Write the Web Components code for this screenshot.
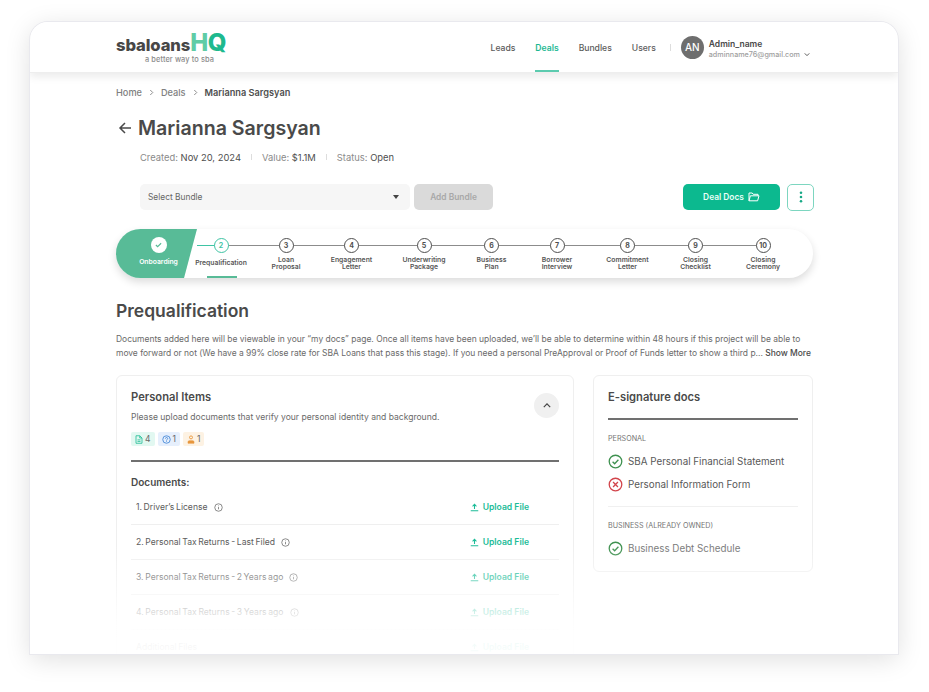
<!DOCTYPE html>
<html lang="en">
<head>
<meta charset="utf-8">
<title>Deals</title>
<style>
    html, body { margin: 0; background: #fff; }
    body {
        padding: 22px 30px 0;
        height: 692px;
        box-sizing: border-box;
        overflow: hidden;
        font-family: Inter, "Liberation Sans", sans-serif;
        color: #4a4a4a;
    }
</style>
</head>
<body>
<app-window>
    <app-header slot="header"></app-header>
    <bread-crumbs></bread-crumbs>
    <deal-summary></deal-summary>
    <deal-toolbar></deal-toolbar>
    <deal-stepper></deal-stepper>
    <stage-intro></stage-intro>
    <div style="display:flex;gap:19px;align-items:flex-start;margin-top:15px">
        <personal-items></personal-items>
        <esign-docs></esign-docs>
    </div>
</app-window>

<script>
const icons = {
    info: `<svg viewBox="0 0 12 12" width="9" height="9" fill="none" stroke="currentColor" stroke-width="1"><circle cx="6" cy="6" r="5"/><path d="M6 5.4v3M6 3.4v.9"/></svg>`,
    upload: `<svg viewBox="0 0 12 12" width="9" height="9" fill="none" stroke="currentColor" stroke-width="1.4"><path d="M6 8V2M3.4 4.4 6 1.8l2.6 2.6M1 10.4h10"/></svg>`,
    ok: `<svg viewBox="0 0 16 16" width="15" height="15" fill="none" stroke="#3f9150" stroke-width="1.4"><circle cx="8" cy="8" r="6.7"/><path d="m4.9 8.2 2.2 2.2 4-4.2"/></svg>`,
    bad: `<svg viewBox="0 0 16 16" width="15" height="15" fill="none" stroke="#d2454c" stroke-width="1.4"><circle cx="8" cy="8" r="6.7"/><path d="m5.4 5.4 5.2 5.2M10.6 5.4l-5.2 5.2"/></svg>`,
};

class AppWindow extends HTMLElement {
    constructor() {
        super();
        this.attachShadow({ mode: 'open' });
        this.shadowRoot.innerHTML = `
            <style>
                :host {
                    display: block;
                    position: relative;
                    width: 868px;
                    height: 632px;
                    box-sizing: border-box;
                    background: #fff;
                    border-radius: 18px 18px 0 0;
                    box-shadow: 0 0 0 1px #e9e9ee, 0 5px 26px rgba(0,0,0,.13);
                    overflow: hidden;
                }
                main { padding: 0 85px 0 86px; }
                .fade {
                    position: absolute;
                    left: 0; right: 0; bottom: 0;
                    height: 110px;
                    background: linear-gradient(rgba(255,255,255,0), rgba(255,255,255,.62) 50%, rgba(255,255,255,.9) 72%, rgba(255,255,255,.97));
                }
            </style>
            <slot name="header"></slot>
            <main><slot></slot></main>
            <div class="fade"></div>
        `;
    }
}

class AppHeader extends HTMLElement {
    constructor() {
        super();
        this.attachShadow({ mode: 'open' });
        this.shadowRoot.innerHTML = `
            <style>
                :host {
                    display: flex;
                    align-items: stretch;
                    justify-content: space-between;
                    position: relative;
                    height: 50px;
                    padding: 0 88px 0 86px;
                    background: #fff;
                    box-shadow: 0 1px 0 #eee, 0 5px 8px rgba(0,0,0,.08);
                }
                .logo { display: flex; flex-direction: column; padding-top: 11px; line-height: 1; }
                .mark { display: flex; align-items: baseline; font-weight: 800; font-size: 16.6px; color: #474747; height: 23px; letter-spacing: -.1px; }
                .hq { font-size: 24px; letter-spacing: -.4px; line-height: 20px; color: #5fcca6; }
                .hq b { color: #1eb98e; font-weight: 800; }
                .tag { font-size: 7.4px; font-weight: 500; color: #8b8b8b; margin: 0 0 0 29px; letter-spacing: .1px; }
                nav { display: flex; align-items: stretch; font-size: 8.6px; color: #5b5b5b; font-weight: 500; }
                nav a { display: flex; align-items: center; margin-right: 20px; padding-top: 1px; box-sizing: border-box; }
                nav a.on { color: #1cb893; font-weight: 600; box-shadow: inset 0 -2px #5ccbaf; }
                .sep { align-self: center; width: 1px; height: 7px; background: #ddd; margin: 0 10px 0 -6px; }
                .user { display: flex; align-items: center; gap: 5px; }
                .av { width: 23px; height: 23px; border-radius: 50%; background: #6e6e6e; color: #fff; font-size: 10px; display: flex; align-items: center; justify-content: center; }
                .nm { font-size: 8.5px; font-weight: 600; color: #4a4a4a; line-height: 11px; margin-top: 3px; }
                .ml { font-size: 7.2px; color: #a0a0a0; line-height: 9px; display: flex; align-items: center; gap: 4px; }
            </style>
            <div class="logo">
                <div class="mark">sbaloans<span class="hq">H<b>Q</b></span></div>
                <div class="tag">a better way to sba</div>
            </div>
            <nav>
                <a>Leads</a><a class="on">Deals</a><a>Bundles</a><a>Users</a>
                <span class="sep"></span>
                <div class="user">
                    <div class="av">AN</div>
                    <div>
                        <div class="nm">Admin_name</div>
                        <div class="ml">adminname76@gmail.com
                            <svg viewBox="0 0 8 6" width="6" height="5" fill="none" stroke="#555" stroke-width="1.3"><path d="m1 1.5 3 3 3-3"/></svg>
                        </div>
                    </div>
                </div>
            </nav>
        `;
    }
}

class BreadCrumbs extends HTMLElement {
    constructor() {
        super();
        this.attachShadow({ mode: 'open' });
        const chev = `<svg viewBox="0 0 6 8" width="5" height="7" fill="none" stroke="#777" stroke-width="1"><path d="m1.5 1 3 3-3 3"/></svg>`;
        this.shadowRoot.innerHTML = `
            <style>
                :host { display: flex; align-items: center; gap: 7px; font-size: 9.2px; font-weight: 500; color: #808080; padding-top: 14px; height: 12px; }
                b { font-weight: 600; color: #4f4f4f; }
            </style>
            <span>Home</span>${chev}<span>Deals</span>${chev}<b>Marianna Sargsyan</b>
        `;
    }
}

class DealSummary extends HTMLElement {
    constructor() {
        super();
        this.attachShadow({ mode: 'open' });
        this.shadowRoot.innerHTML = `
            <style>
                :host { display: block; }
                h1 { display: flex; align-items: center; gap: 6px; margin: 18px 0 0 2px; font-size: 19.6px; line-height: 24px; font-weight: 600; color: #4a4a4a; }
                .meta { display: flex; align-items: center; margin: 10px 0 0 24px; font-size: 9.4px; color: #8a8a8a; height: 14px; }
                .meta b { font-weight: 400; color: #4f4f4f; }
                i { width: 1px; height: 6px; background: #ddd; margin: 0 10px; }
            </style>
            <h1>
                <svg viewBox="0 0 14 14" width="14" height="14" fill="none" stroke="#4a4a4a" stroke-width="1.5"><path d="M13 7H2M7 2 2 7l5 5"/></svg>
                Marianna Sargsyan
            </h1>
            <div class="meta">
                <span>Created: <b>Nov 20, 2024</b></span><i></i>
                <span>Value: <b>$1.1M</b></span><i></i>
                <span>Status: <b>Open</b></span>
            </div>
        `;
    }
}

class DealToolbar extends HTMLElement {
    constructor() {
        super();
        this.attachShadow({ mode: 'open' });
        this.shadowRoot.innerHTML = `
            <style>
                :host { display: flex; align-items: center; margin: 20px -1px 0 24px; height: 26px; font-size: 8.4px; }
                .select { display: flex; align-items: center; justify-content: space-between; box-sizing: border-box; width: 270px; height: 26px; padding: 0 11px 0 8px; background: #f6f6f6; border-radius: 5px; color: #666; }
                .select i { border: 3.5px solid transparent; border-top: 4px solid #444; border-bottom: 0; }
                .add { display: flex; align-items: center; justify-content: center; width: 79px; height: 26px; margin-left: 4px; background: #dadada; border-radius: 5px; color: #a8a8a8; font-weight: 600; }
                .docs { display: flex; align-items: center; justify-content: center; gap: 4px; width: 97px; height: 26px; margin-left: auto; background: #0cb98f; border-radius: 5px; color: #e9fff8; font-weight: 600; }
                .more { display: flex; align-items: center; justify-content: center; box-sizing: border-box; width: 27px; height: 27px; margin-left: 7px; border: 1px solid #7dd6c0; border-radius: 5px; background: #fff; }
            </style>
            <div class="select">Select Bundle<i></i></div>
            <div class="add">Add Bundle</div>
            <div class="docs">Deal Docs
                <svg viewBox="0 0 12 10" width="12" height="10" fill="none" stroke="#fff" stroke-width="1"><path d="M1 8.8V1h3.2l1 1.3H10v1.5M1 8.8h8.6L11 3.8H2.4z"/></svg>
            </div>
            <div class="more">
                <svg viewBox="0 0 4 14" width="4" height="12" fill="#17a886"><circle cx="2" cy="2" r="1.5"/><circle cx="2" cy="7" r="1.5"/><circle cx="2" cy="12" r="1.5"/></svg>
            </div>
        `;
    }
}

class DealStepper extends HTMLElement {
    steps = [
        ['2', 'Prequalification', 48], ['3', 'Loan<br>Proposal', 82], ['4', 'Engagement<br>Letter', 49],
        ['5', 'Underwriting<br>Package', 96], ['6', 'Business<br>Plan', 39], ['7', 'Borrower<br>Interview', 92],
        ['8', 'Commitment<br>Letter', 49], ['9', 'Closing<br>Checklist', 87], ['10', 'Closing<br>Ceremony', 48],
    ];

    constructor() {
        super();
        this.attachShadow({ mode: 'open' });
        this.render();
    }

    render() {
        const cells = this.steps.map(([num, label, width], i) => `
            <div class="step ${i === 0 ? 'on' : ''}" style="width:${width}px">
                <span class="dot">${num}</span>
                <span class="lbl">${label}</span>
            </div>`).join('');

        this.shadowRoot.innerHTML = `
            <style>
                :host {
                    display: flex;
                    position: relative;
                    height: 49px;
                    margin-top: 19px;
                    border-radius: 25px;
                    background: #fff;
                    box-shadow: 0 4px 8px rgba(0,0,0,.14);
                    font-size: 6.8px;
                    font-weight: 600;
                    color: #565656;
                }
                .first {
                    width: 81px;
                    height: 49px;
                    border-radius: 25px 0 0 25px;
                    background: #58bb97;
                    clip-path: polygon(0 0, 100% 0, 84% 100%, 0 100%);
                    color: #fff;
                    display: flex;
                    flex-direction: column;
                    align-items: center;
                    padding: 8px 0 0 4px;
                    box-sizing: border-box;
                    flex: none;
                }
                .check { width: 16px; height: 16px; border-radius: 50%; background: #fff; display: flex; align-items: center; justify-content: center; margin-bottom: 4px; }
                .line { position: absolute; left: 81px; width: 566px; top: 16px; height: 1px; background: #8c8c8c; }
                .line::before { content: ''; position: absolute; left: 0; top: 0; width: 18px; height: 1px; background: #3fc4a4; }
                .step { position: relative; flex: none; display: flex; flex-direction: column; align-items: center; padding-top: 9px; box-sizing: border-box; height: 49px; }
                .dot { display: flex; align-items: center; justify-content: center; box-sizing: border-box; width: 15px; height: 15px; border-radius: 50%; border: 1px solid #4f4f4f; background: #fff; font-size: 7px; font-weight: 700; color: #4f4f4f; }
                .lbl { margin-top: 3px; line-height: 7.4px; text-align: center; white-space: nowrap; }
                .on .dot { border-color: #3fc4a4; color: #3fc4a4; }
                .on .lbl { margin-top: 6px; }
                .on::after { content: ''; position: absolute; left: 10px; bottom: 0; width: 30px; height: 2px; background: #58bb97; }
            </style>
            <div class="first">
                <span class="check"><svg viewBox="0 0 8 6" width="7" height="6" fill="none" stroke="#58bb97" stroke-width="1.3"><path d="m1 3 2 2 4-4"/></svg></span>
                <span>Onboarding</span>
            </div>
            <div class="line"></div>
            ${cells}
        `;
    }
}

class StageIntro extends HTMLElement {
    constructor() {
        super();
        this.attachShadow({ mode: 'open' });
        this.shadowRoot.innerHTML = `
            <style>
                :host { display: block; margin-top: 22px; }
                h2 { margin: 0; font-size: 17.5px; line-height: 21px; font-weight: 600; color: #4a4a4a; }
                p { margin: 11px 0 0; font-size: 8.48px; line-height: 14px; color: #6a6a6a; white-space: nowrap; }
                span { letter-spacing: -.02px; }
                b { font-weight: 500; color: #4a4a4a; }
            </style>
            <h2>Prequalification</h2>
            <p>Documents added here will be viewable in your “my docs” page. Once all items have been uploaded, we’ll be able to determine within 48 hours if this project will be able to<br><span>move forward or not (We have a 99% close rate for SBA Loans that pass this stage). If you need a personal PreApproval or Proof of Funds letter to show a third p...</span> <b>Show More</b></p>
        `;
    }
}

class UploadRow extends HTMLElement {
    constructor() {
        super();
        this.attachShadow({ mode: 'open' });
    }

    connectedCallback() {
        const hasInfo = this.dataset.info !== 'no';
        this.shadowRoot.innerHTML = `
            <style>
                :host { display: flex; align-items: center; height: 35px; box-sizing: border-box; border-bottom: 1px solid #efefef; padding: 0 30px 0 5px; font-size: 8.6px; word-spacing: -.8px; color: #5c5c5c; }
                .info { display: flex; margin-left: 6px; color: #666; }
                .up { display: flex; align-items: center; gap: 4px; margin-left: auto; color: #1cbc98; font-weight: 600; word-spacing: 0; }
            </style>
            <span>${this.dataset.label}</span>
            ${hasInfo ? `<span class="info">${icons.info}</span>` : ''}
            <span class="up">${icons.upload}Upload File</span>
        `;
    }
}
customElements.define('upload-row', UploadRow);

class PersonalItems extends HTMLElement {
    constructor() {
        super();
        this.attachShadow({ mode: 'open' });
        this.shadowRoot.innerHTML = `
            <style>
                :host { display: block; position: relative; box-sizing: border-box; width: 458px; flex: none; padding: 14px 14px 0; border: 1px solid #efefef; border-radius: 6px; background: #fff; }
                h3 { margin: 0; font-size: 11.2px; line-height: 15px; font-weight: 600; color: #4a4a4a; }
                .sub { margin: 6px 0 0; font-size: 8.55px; line-height: 12px; color: #6a6a6a; }
                .toggle { position: absolute; right: 14px; top: 17px; width: 25px; height: 25px; border-radius: 50%; background: #f0f0f0; display: flex; align-items: center; justify-content: center; }
                .chips { display: flex; gap: 3px; margin-top: 9px; }
                .chip { display: flex; align-items: center; gap: 2px; height: 14px; padding: 0 4px; border-radius: 2px; font-size: 8.5px; color: #666; }
                hr { height: 2px; border: 0; margin: 14px 0 0; background: #707070; }
                h4 { margin: 14px 0 0; font-size: 10px; line-height: 12px; font-weight: 600; color: #4a4a4a; }
                .rows { margin-top: 2px; }
            </style>
            <h3>Personal Items</h3>
            <p class="sub">Please upload documents that verify your personal identity and background.</p>
            <span class="toggle"><svg viewBox="0 0 10 6" width="8" height="5" fill="none" stroke="#444" stroke-width="1.5"><path d="m1 5 4-4 4 4"/></svg></span>
            <div class="chips">
                <span class="chip" style="background:#e2f8f1"><svg viewBox="0 0 10 12" width="8" height="9" fill="none" stroke="#24bd96" stroke-width="1.1"><path d="M1 1h5l3 3v7H1zM6 1v3h3M3 6.5h4M3 8.6h4"/></svg>4</span>
                <span class="chip" style="background:#e6effc"><svg viewBox="0 0 12 12" width="9" height="9" fill="none" stroke="#3b82d6" stroke-width="1.1"><circle cx="6" cy="6" r="5"/><path d="M4.6 4.8a1.5 1.5 0 1 1 2.2 1.3c-.5.3-.8.6-.8 1.2M6 8.3v.9"/></svg>1</span>
                <span class="chip" style="background:#fdf2e3"><svg viewBox="0 0 10 12" width="8" height="9" fill="#e8973c" stroke="#e8973c" stroke-width=".8"><circle cx="5" cy="3.2" r="2" fill="none" stroke-width="1.2"/><path d="M1 11V9.3c0-1 .8-1.7 1.8-1.7h4.4c1 0 1.8.7 1.8 1.7V11z"/></svg>1</span>
            </div>
            <hr>
            <h4>Documents:</h4>
            <div class="rows">
                <upload-row data-label="1. Driver’s License"></upload-row>
                <upload-row data-label="2. Personal Tax Returns - Last Filed"></upload-row>
                <upload-row data-label="3. Personal Tax Returns - 2 Years ago"></upload-row>
                <upload-row data-label="4. Personal Tax Returns - 3 Years ago"></upload-row>
                <upload-row data-label="Additional Files" data-info="no"></upload-row>
            </div>
        `;
    }
}

class EsignDocs extends HTMLElement {
    constructor() {
        super();
        this.attachShadow({ mode: 'open' });
        this.shadowRoot.innerHTML = `
            <style>
                :host { display: block; box-sizing: border-box; width: 220px; flex: none; height: 197px; padding: 14px 14px 0; border: 1px solid #efefef; border-radius: 6px; background: #fff; }
                h3 { margin: 0; font-size: 11.2px; line-height: 15px; font-weight: 600; color: #4a4a4a; }
                hr { height: 2px; border: 0; margin: 13px 0 0; background: #707070; }
                .cat { margin-top: 14px; font-size: 7.2px; line-height: 9px; color: #757575; }
                .doc { display: flex; align-items: center; gap: 5px; height: 15px; font-size: 9.8px; color: #575757; }
                .cat + .doc { margin-top: 11px; }
                .doc + .doc { margin-top: 8px; }
                .thin { height: 1px; background: #f0f0f0; margin-top: 14px; }
                .thin + .cat { margin-top: 14px; }
                .dim { color: #777; }
            </style>
            <h3>E-signature docs</h3>
            <hr>
            <div class="cat">PERSONAL</div>
            <div class="doc">${icons.ok}SBA Personal Financial Statement</div>
            <div class="doc">${icons.bad}Personal Information Form</div>
            <div class="thin"></div>
            <div class="cat">BUSINESS (ALREADY OWNED)</div>
            <div class="doc dim">${icons.ok}Business Debt Schedule</div>
        `;
    }
}

customElements.define('app-window', AppWindow);
customElements.define('app-header', AppHeader);
customElements.define('bread-crumbs', BreadCrumbs);
customElements.define('deal-summary', DealSummary);
customElements.define('deal-toolbar', DealToolbar);
customElements.define('deal-stepper', DealStepper);
customElements.define('stage-intro', StageIntro);
customElements.define('personal-items', PersonalItems);
customElements.define('esign-docs', EsignDocs);
</script>
</body>
</html>
